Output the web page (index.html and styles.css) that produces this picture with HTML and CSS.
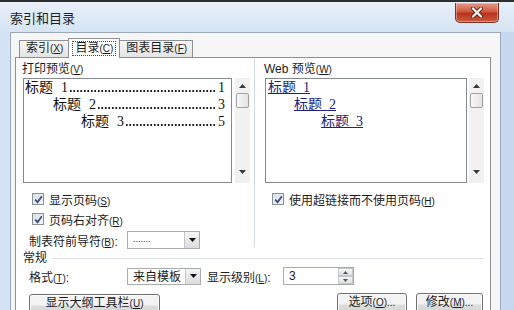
FILE: index.html
```html
<!DOCTYPE html>
<html lang="zh-CN">
<head>
    <meta charset="UTF-8">
    <meta name="viewport" content="width=device-width, initial-scale=1.0">
    <title>索引和目录</title>
    <link rel="stylesheet" href="styles.css">
</head>
<body>
<div class="window">
    <div class="titlebar">
        <span class="title">索引和目录</span>
        <div class="close">
            <svg width="14" height="11" viewBox="0 0 14 11">
                <path d="M3 1.5 L11 9.5 M11 1.5 L3 9.5" stroke="#6e2418" stroke-width="4" stroke-linecap="round"/>
                <path d="M3 1.5 L11 9.5 M11 1.5 L3 9.5" stroke="#fff" stroke-width="2.2" stroke-linecap="round"/>
            </svg>
        </div>
    </div>

    <div class="client">
        <div class="tabs">
            <div class="tab">索引<span class="key">(<u>X</u>)</span></div>
            <div class="tab active"><span class="focus">目录<span class="key">(<u>C</u>)</span></span></div>
            <div class="tab">图表目录<span class="key">(<u>F</u>)</span></div>
        </div>

        <div class="panel">
            <div class="columns">
                <!-- print preview -->
                <div class="col left">
                    <div class="label">打印预览<span class="key">(<u>V</u>)</span></div>
                    <div class="preview">
                        <div class="box">
                            <div class="toc-line">
                                <span class="name">标题<span class="n">1</span></span>
                                <span class="lead"></span>
                                <span class="page">1</span>
                            </div>
                            <div class="toc-line lvl2">
                                <span class="name">标题<span class="n">2</span></span>
                                <span class="lead"></span>
                                <span class="page">3</span>
                            </div>
                            <div class="toc-line lvl3">
                                <span class="name">标题<span class="n">3</span></span>
                                <span class="lead"></span>
                                <span class="page">5</span>
                            </div>
                        </div>
                        <div class="scrollbar">
                            <div class="arrow"><svg width="7" height="4" viewBox="0 0 7 4"><polygon points="0,4 3.5,0 7,4" fill="#3a3a3a"/></svg></div>
                            <div class="thumb"></div>
                            <div class="track"></div>
                            <div class="arrow down"><svg width="7" height="4" viewBox="0 0 7 4"><polygon points="0,0 7,0 3.5,4" fill="#3a3a3a"/></svg></div>
                        </div>
                    </div>

                    <div class="check first">
                        <span class="cb"><svg width="9" height="9" viewBox="0 0 9 9"><path d="M1.2 4.6 L3.6 7.2 L7.8 1.2" stroke="#3b4f8c" stroke-width="1.8" fill="none"/></svg></span>
                        <span>显示页码<span class="key">(<u>S</u>)</span></span>
                    </div>
                    <div class="check">
                        <span class="cb"><svg width="9" height="9" viewBox="0 0 9 9"><path d="M1.2 4.6 L3.6 7.2 L7.8 1.2" stroke="#3b4f8c" stroke-width="1.8" fill="none"/></svg></span>
                        <span>页码右对齐<span class="key">(<u>R</u>)</span></span>
                    </div>

                    <div class="field">
                        <span class="field-label">制表符前导符<span class="key">(<u>B</u>)</span>:</span>
                        <div class="combo">
                            <span class="combo-text leader">.......</span>
                            <span class="combo-btn"><svg width="7" height="4" viewBox="0 0 7 4"><polygon points="0,0 7,0 3.5,4" fill="#111"/></svg></span>
                        </div>
                    </div>
                </div>

                <!-- web preview -->
                <div class="col right">
                    <div class="label">Web 预览<span class="key">(<u>W</u>)</span></div>
                    <div class="preview">
                        <div class="box web">
                            <div class="web-line"><a>标题&nbsp;&nbsp;1</a></div>
                            <div class="web-line lvl2"><a>标题&nbsp;&nbsp;2</a></div>
                            <div class="web-line lvl3"><a>标题&nbsp;&nbsp;3</a></div>
                        </div>
                        <div class="scrollbar">
                            <div class="arrow"><svg width="7" height="4" viewBox="0 0 7 4"><polygon points="0,4 3.5,0 7,4" fill="#3a3a3a"/></svg></div>
                            <div class="thumb"></div>
                            <div class="track"></div>
                            <div class="arrow down"><svg width="7" height="4" viewBox="0 0 7 4"><polygon points="0,0 7,0 3.5,4" fill="#3a3a3a"/></svg></div>
                        </div>
                    </div>

                    <div class="check first">
                        <span class="cb"><svg width="9" height="9" viewBox="0 0 9 9"><path d="M1.2 4.6 L3.6 7.2 L7.8 1.2" stroke="#3b4f8c" stroke-width="1.8" fill="none"/></svg></span>
                        <span>使用超链接而不使用页码<span class="key">(<u>H</u>)</span></span>
                    </div>
                </div>
            </div>

            <div class="general">
                <div class="group">常规</div>
                <div class="field">
                    <span class="field-label">格式<span class="key">(<u>T</u>)</span>:</span>
                    <div class="combo wide">
                        <span class="combo-text">来自模板</span>
                        <span class="combo-btn"><svg width="7" height="4" viewBox="0 0 7 4"><polygon points="0,0 7,0 3.5,4" fill="#111"/></svg></span>
                    </div>
                    <span class="level-label">显示级别<span class="key">(<u>L</u>)</span>:</span>
                    <div class="spin">
                        <span class="spin-text">3</span>
                        <span class="spin-btns">
                            <span class="spin-btn"><svg width="5" height="3" viewBox="0 0 5 3"><polygon points="0,3 2.5,0 5,3" fill="#555"/></svg></span>
                            <span class="spin-btn"><svg width="5" height="3" viewBox="0 0 5 3"><polygon points="0,0 5,0 2.5,3" fill="#555"/></svg></span>
                        </span>
                    </div>
                </div>
                <div class="buttons">
                    <button class="btn outline">显示大纲工具栏<span class="key">(<u>U</u>)</span></button>
                    <button class="btn options">选项<span class="key">(<u>O</u>)...</span></button>
                    <button class="btn modify">修改<span class="key">(<u>M</u>)...</span></button>
                </div>
            </div>
        </div>
    </div>
</div>
</body>
</html>
```

FILE: styles.css
```css
* {
    margin: 0;
    padding: 0;
    box-sizing: border-box;
}

body {
    width: 514px;
    height: 310px;
    overflow: hidden;
    font-family: "Liberation Sans", "Noto Sans CJK SC", sans-serif;
    font-size: 12px;
    color: #1c1c1c;
    background: #c9dcf1;
}

.key {
    font-size: 10px;
}

.window {
    height: 310px;
    border-top: 2px solid #2e2e2e;
    background: linear-gradient(to right, #d5e4f5, #c6d9ef);
    display: flex;
    flex-direction: column;
}

/* title bar */
.titlebar {
    height: 30px;
    flex-shrink: 0;
    display: flex;
    align-items: flex-start;
    padding-left: 10px;
    background: linear-gradient(to bottom, #e8f0fa, #d6e4f4);
}

.title {
    font-size: 13px;
    line-height: 14px;
    margin-top: 10px;
    color: #1e1e1e;
}

.close {
    margin-left: auto;
    margin-right: 15px;
    margin-top: 1px;
    width: 44px;
    height: 20px;
    border: 1px solid #7d3024;
    border-top: none;
    border-radius: 0 0 5px 5px;
    background: linear-gradient(to bottom, #e49b8a, #cf5a40 45%, #b9321b 55%, #c85d42);
    display: flex;
    align-items: center;
    justify-content: center;
    box-shadow: inset 0 0 0 1px rgba(255, 210, 200, 0.45);
}

/* dialog body */
.client {
    flex: 1;
    margin: 0 13px 0 10px;
    border: 1px solid #9aa8ba;
    border-bottom: none;
    background: #f6f6f6;
    display: flex;
    flex-direction: column;
}

.tabs {
    display: flex;
    align-items: flex-end;
    padding: 5px 0 0 8px;
    position: relative;
    z-index: 1;
}

.tab {
    height: 17px;
    line-height: 15px;
    padding: 0 5px 0 6px;
    border: 1px solid #8d9196;
    border-bottom: none;
    margin-right: -1px;
    background: linear-gradient(to bottom, #f8f8f8, #e3e3e3);
    white-space: nowrap;
}

.tab.active {
    height: 20px;
    margin-bottom: -1px;
    padding: 2px 3px 0 3px;
    background: #fff;
}

.focus {
    display: inline-block;
    border: 1px dotted #4a4a4a;
    padding: 0 2px;
    line-height: 13px;
}

.panel {
    flex: 1;
    margin: 0 9px 0 4px;
    border: 1px solid #8d9196;
    background: #fff;
}

.columns {
    display: flex;
    align-items: flex-start;
}

.col.left {
    width: 238px;
    padding: 4px 0 0 6px;
}

.col.right {
    flex: 1;
    height: 189px;
    border-left: 1px solid #d4dbe1;
    padding: 4px 0 0 9px;
}

.label {
    height: 14px;
    line-height: 14px;
}

.preview {
    display: flex;
    height: 105px;
    margin: 2px 0 0 1px;
}

.box {
    width: 209px;
    border: 1px solid #858a91;
    padding: 0 6px 0 1px;
    font-family: "Liberation Serif", "Noto Sans CJK SC", serif;
    font-size: 14px;
    line-height: 17px;
    color: #111;
    overflow: hidden;
}

.box.web {
    width: 202px;
}

.toc-line {
    display: flex;
    white-space: nowrap;
}

.toc-line .name {
    flex-shrink: 0;
}

.toc-line .n {
    margin-left: 8px;
}

/* dotted leader between title and page number */
.toc-line .lead {
    flex: 1;
    align-self: flex-end;
    height: 2px;
    margin: 0 0 4px 1px;
    background-image: radial-gradient(circle, #1a1a1a 0.8px, transparent 1.1px);
    background-size: 3.5px 2px;
    background-repeat: repeat-x;
}

.toc-line .page {
    margin-left: 3px;
}

.lvl2 {
    padding-left: 28px;
}

.lvl3 {
    padding-left: 56px;
}

.web-line {
    padding-left: 1px;
}

.web-line.lvl2 {
    padding-left: 27px;
}

.web-line.lvl3 {
    padding-left: 54px;
}

.web-line a {
    color: #23227a;
    text-decoration: underline;
}

.scrollbar {
    width: 15px;
    margin-left: 3px;
    background: #f1f1f1;
    display: flex;
    flex-direction: column;
}

.right .scrollbar {
    margin-left: 2px;
}

.scrollbar .arrow {
    height: 15px;
    display: flex;
    align-items: center;
    justify-content: center;
}

.scrollbar .arrow.down {
    height: 19px;
    padding-bottom: 4px;
}

.thumb {
    height: 15px;
    margin: 0 1px;
    border: 1px solid #a2a2a2;
    border-radius: 2px;
    background: linear-gradient(to right, #f8f8f8, #e2e2e2);
}

.track {
    flex: 1;
}

/* check boxes */
.check {
    display: flex;
    align-items: center;
    height: 20px;
    margin-left: 10px;
}

.right .check {
    margin-left: 8px;
}

.check.first {
    margin-top: 6px;
}

.cb {
    width: 12px;
    height: 12px;
    margin-right: 5px;
    border: 1px solid #8e8f8f;
    background: linear-gradient(135deg, #d8dfe9, #f7f9fb);
    display: flex;
    align-items: center;
    justify-content: center;
}

/* form rows */
.field {
    display: flex;
    align-items: center;
    height: 22px;
    margin-left: 7px;
}

.field-label {
    width: 98px;
    flex-shrink: 0;
}

.combo {
    width: 73px;
    height: 18px;
    border: 1px solid #a8acb2;
    background: #fff;
    display: flex;
}

.combo.wide {
    width: 74px;
    height: 17px;
}

.combo-text {
    flex: 1;
    padding-left: 5px;
    line-height: 16px;
    font-size: 12px;
}

.combo-text.leader {
    font-size: 9px;
    line-height: 14px;
}

.combo-btn {
    width: 15px;
    border-left: 1px solid #c4c7cb;
    background: linear-gradient(to bottom, #f4f4f4, #dcdcdc);
    display: flex;
    align-items: center;
    justify-content: center;
}

.general {
    padding: 0 7px 0 7px;
}

.group {
    display: flex;
    align-items: center;
    height: 14px;
    line-height: 14px;
}

.group::after {
    content: "";
    flex: 1;
    height: 1px;
    margin: 0 0 0 5px;
    background: #dadee3;
}

.general .field {
    margin: 2px 0 0 6px;
    height: 18px;
}

.level-label {
    margin-left: 6px;
    width: 76px;
    flex-shrink: 0;
}

.spin {
    width: 71px;
    height: 18px;
    border: 1px solid #a8acb2;
    display: flex;
}

.spin-text {
    flex: 1;
    padding-left: 5px;
    line-height: 16px;
}

.spin-btns {
    width: 15px;
    display: flex;
    flex-direction: column;
}

.spin-btn {
    flex: 1;
    border: 1px solid #c4c7cb;
    background: linear-gradient(to bottom, #f6f6f6, #e0e0e0);
    display: flex;
    align-items: center;
    justify-content: center;
}

.buttons {
    display: flex;
    margin: 8px 0 0 6px;
}

.btn {
    height: 23px;
    padding-bottom: 5px;
    line-height: 14px;
    font-family: "Liberation Sans", "Noto Sans CJK SC", sans-serif;
    font-size: 12px;
    color: #1c1c1c;
    border: 1px solid #707070;
    border-radius: 3px;
    background: linear-gradient(to bottom, #f3f3f3 45%, #dcdcdc 55%, #d2d2d2);
    box-shadow: inset 0 0 0 1px #fbfbfb;
}

.btn.outline {
    width: 131px;
    margin-top: 1px;
}

.btn.options {
    width: 70px;
    margin-left: auto;
}

.btn.modify {
    width: 67px;
    margin-left: 9px;
}
```
